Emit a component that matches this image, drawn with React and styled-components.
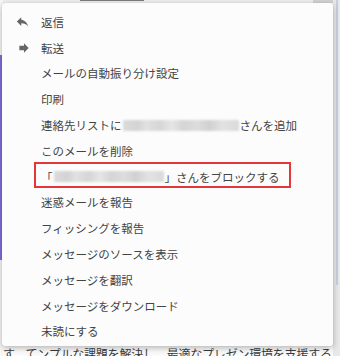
import React from "react";
import styled, { createGlobalStyle } from "styled-components";

const GlobalStyle = createGlobalStyle`
  body {
    margin: 0;
    font-family: "Noto Sans CJK JP", "Noto Sans", sans-serif;
    background: #f4f4f4;
  }
`;

const Page = styled.div`
  position: relative;
  width: 340px;
  height: 356px;
  overflow: hidden;
  display: grid;
  grid-template-columns: 3px 1fr 7px;
  background: #f7f7f7;
`;

const LeftRail = styled.div`
  display: flex;
  flex-direction: column;
  padding-top: 55px;
`;

const RailBar = styled.div`
  width: 2px;
  height: 205px;
  background: #7d71d8;
`;

const Content = styled.div`
  display: flex;
  flex-direction: column;
  justify-content: space-between;
  background: #fafafa;
`;

const TopStrip = styled.div`
  height: 3px;
  display: flex;
  align-items: flex-start;
  background: #eeeeee;
  padding-left: 77px;
  gap: 120px;
`;

const TopLine = styled.div`
  width: 64px;
  height: 1px;
  background: #7a7a7a;
`;

const TopBlock = styled.div`
  margin-left: auto;
  width: 20px;
  height: 3px;
  background: #d2d2d2;
`;

const BottomText = styled.div`
  font-size: 12px;
  line-height: 16px;
  color: #3a3a3a;
  white-space: nowrap;
  margin-bottom: -6px;
  letter-spacing: -0.2px;
`;

const Gutter = styled.div`
  display: flex;
  background: #e8e8e8;
  padding-left: 3px;
`;

const Thumb = styled.div`
  width: 2px;
  height: 285px;
  background: #c6cee0;
`;

const Menu = styled.div`
  position: absolute;
  top: 3px;
  left: 2px;
  width: 331px;
  height: 343px;
  box-sizing: border-box;
  padding-top: 6px;
  background: #fcfcfc;
  border-radius: 3px;
  box-shadow: 0 2px 6px rgba(0, 0, 0, 0.28), 0 0 1px rgba(0, 0, 0, 0.15);
  overflow: hidden;
`;

const Item = styled.div`
  display: flex;
  align-items: center;
  height: 25.8px;
  font-size: 11.5px;
  color: #444;
  white-space: nowrap;
`;

const IconSlot = styled.span`
  width: 39px;
  flex: none;
  display: flex;
  align-items: center;
  padding-left: ${(p) => p.$pad || 13}px;
  box-sizing: border-box;
  color: #666;
`;

const Blurred = styled.span`
  display: inline-block;
  width: ${(p) => p.$w}px;
  height: 11px;
  margin: 0 ${(p) => p.$gap || 0}px;
  background: linear-gradient(
    90deg,
    #d9d9d9 0%,
    #cfcfcf 12%,
    #dedede 20%,
    #d2d2d2 32%,
    #e4e4e4 42%,
    #d0d0d0 52%,
    #dadada 64%,
    #cccccc 74%,
    #e0e0e0 86%,
    #d6d6d6 100%
  );
  filter: blur(1.2px);
  opacity: 0.9;
`;

const Highlight = styled.span`
  display: flex;
  align-items: center;
  height: 26px;
  box-sizing: border-box;
  margin-left: -7px;
  margin-bottom: 4px;
  padding: 4px 9px 0 5px;
  border: 2px solid #e2363b;
`;

const ReplyIcon = () => (
  <svg width="15" height="15" viewBox="0 0 24 24" fill="currentColor">
    <path d="M10 9V5l-7 7 7 7v-4.1c5 0 8.5 1.6 11 5.1-1-5-4-10-11-11z" />
  </svg>
);

const ForwardIcon = () => (
  <svg width="14" height="14" viewBox="0 0 24 24" fill="currentColor">
    <path d="M12 8V4l8 8-8 8v-4H4V8z" />
  </svg>
);

const plain = [
  "迷惑メールを報告",
  "フィッシングを報告",
  "メッセージのソースを表示",
  "メッセージを翻訳",
  "メッセージをダウンロード",
  "未読にする",
];

export default function App() {
  return (
    <>
      <GlobalStyle />
      <Page>
        <LeftRail>
          <RailBar />
        </LeftRail>
        <Content>
          <TopStrip>
            <TopLine />
            <TopBlock />
          </TopStrip>
          <BottomText>す。てンプルな課題を解決し、最適なプレゼン環境を支援する</BottomText>
        </Content>
        <Gutter>
          <Thumb />
        </Gutter>

        <Menu>
          <Item>
            <IconSlot $pad={13}>
              <ReplyIcon />
            </IconSlot>
            返信
          </Item>
          <Item>
            <IconSlot $pad={15}>
              <ForwardIcon />
            </IconSlot>
            転送
          </Item>
          <Item>
            <IconSlot />
            メールの自動振り分け設定
          </Item>
          <Item>
            <IconSlot />
            印刷
          </Item>
          <Item>
            <IconSlot />
            連絡先リストに
            <Blurred $w={116} $gap={1} />
            さんを追加
          </Item>
          <Item>
            <IconSlot />
            このメールを削除
          </Item>
          <Item>
            <IconSlot />
            <Highlight>
              「<Blurred $w={110} $gap={1} />」さんをブロックする
            </Highlight>
          </Item>
          {plain.map((t) => (
            <Item key={t}>
              <IconSlot />
              {t}
            </Item>
          ))}
        </Menu>
      </Page>
    </>
  );
}
